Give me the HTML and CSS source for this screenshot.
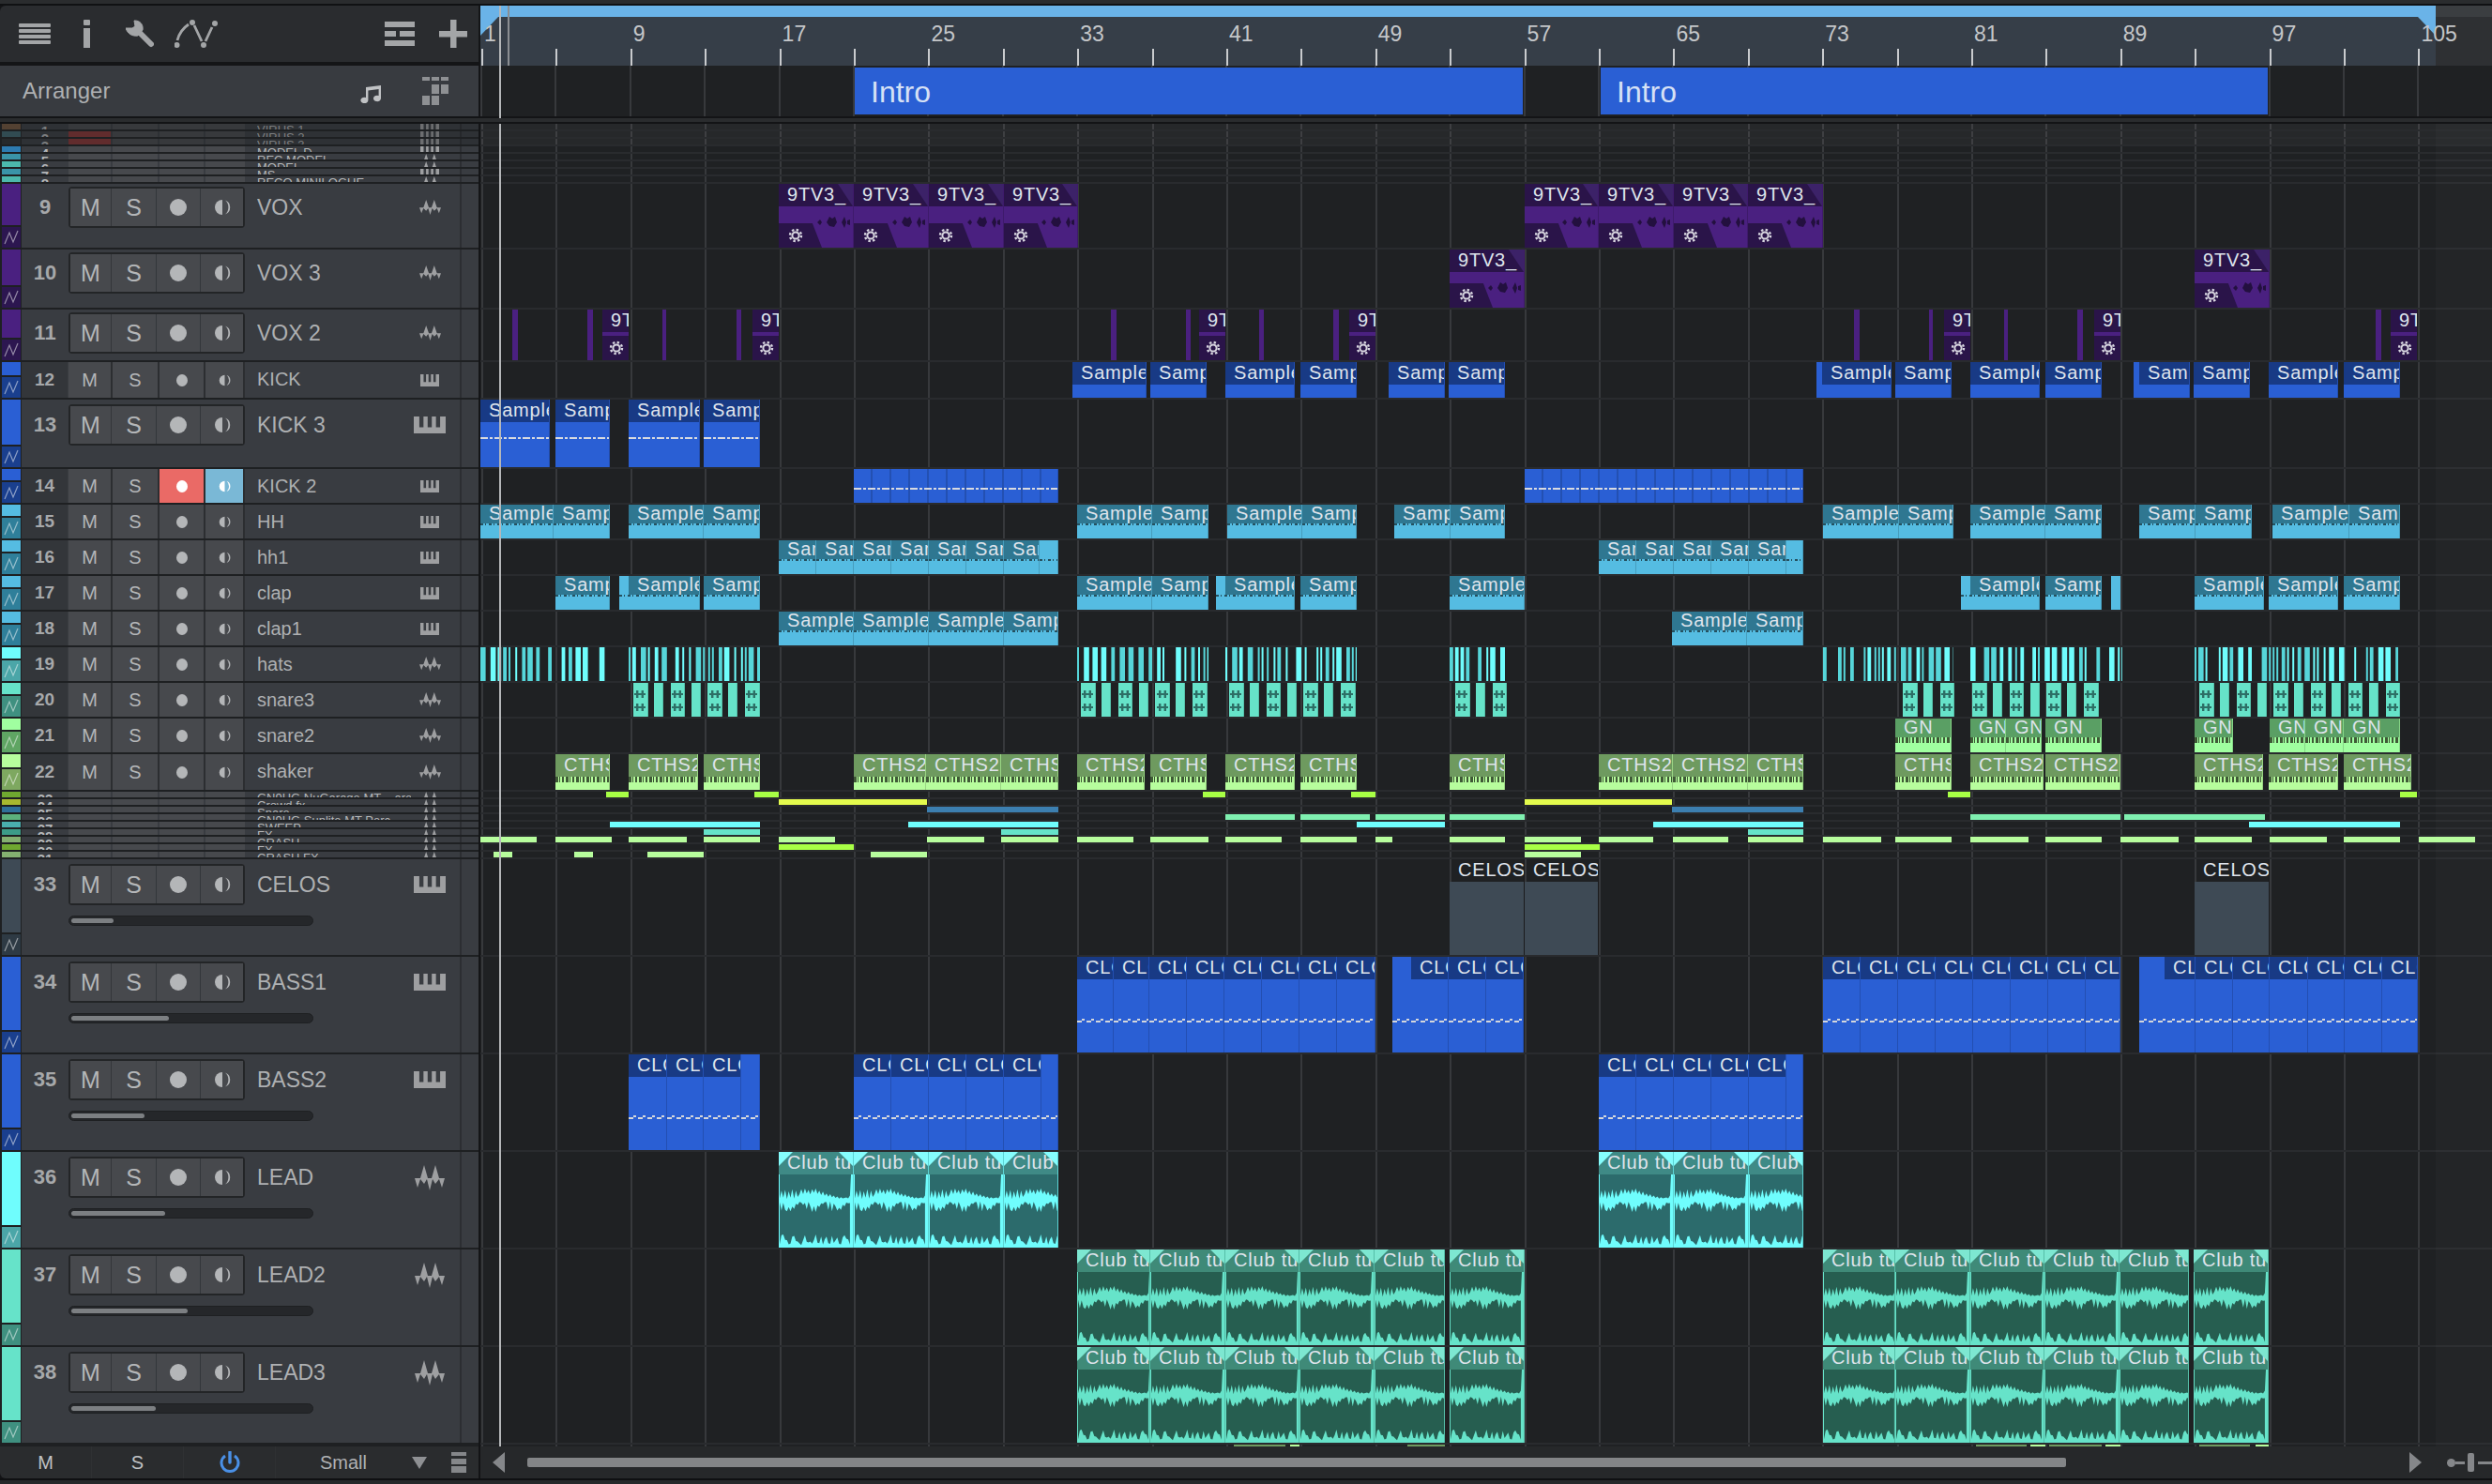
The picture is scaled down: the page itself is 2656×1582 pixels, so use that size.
FILE: index.html
```html
<!DOCTYPE html>
<html lang="en">
<head>
<meta charset="utf-8">
<title>Arranger</title>
<link rel="stylesheet" href="styles.css">
</head>
<body>
<div class="app">
  <div class="top-strip"></div>

  <div class="head-row">
    <div class="toolbar">
      <svg class="tb-ico tb-menu" viewBox="0 0 34 22"><rect width="34" height="4" rx="1"/><rect y="6" width="34" height="4" rx="1"/><rect y="12" width="34" height="4" rx="1"/><rect y="18" width="34" height="4" rx="1"/></svg>
      <svg class="tb-ico tb-info" viewBox="0 0 7 30"><rect width="7" height="6" y="0" rx="1"/><rect y="9" width="7" height="21"/></svg>
      <svg class="tb-ico tb-wrench" viewBox="0 0 30 30"><path d="M15 14 L27 26" fill="none" stroke-width="6" stroke-linecap="round"/><path d="M11 1 C16 1 20 5 19 11 L14 17 C8 18 3 15 1 9 L8 9 L11 7 L10 1 Z" transform="translate(-1 0)"/></svg>
      <svg class="tb-ico tb-auto" viewBox="0 0 46 30"><path class="tb-line" d="M3 22 C5 14 9 9 15 5 M21 6 L29 23 M33 23 L40 8"/><circle cx="2.5" cy="27" r="3"/><circle cx="19" cy="3" r="3"/><circle cx="31" cy="27" r="3"/><circle cx="43" cy="4" r="3"/></svg>
      <span class="tb-fill"></span>
      <svg class="tb-ico tb-list" viewBox="0 0 32 26"><rect width="32" height="6"/><rect y="10" width="12" height="6"/><rect x="16" y="10" width="16" height="6"/><rect y="20" width="32" height="6"/></svg>
      <svg class="tb-ico tb-plus" viewBox="0 0 30 30"><rect x="12" width="6.5" height="30"/><rect y="12" width="30" height="6.5"/></svg>
    </div>
    <div class="ruler" id="ruler">
      <div class="ruler-loop"><div class="ruler-band"></div></div>
      <div class="loop-tri loop-tri--left"></div>
      <div class="loop-tri loop-tri--right"></div>
      <div class="ruler-mark"></div>
    </div>
  </div>

  <div class="arr-row">
    <div class="arr-head">
      <span class="arr-title">Arranger</span>
      <span class="tb-fill"></span>
      <svg class="tb-ico arr-note" viewBox="0 0 24 20"><path d="M6 3 L22 1 V15 A4 3.2 0 1 1 19.6 12 V5 L8.4 6.4 V17 A4 3.2 0 1 1 6 14 Z"/></svg>
      <svg class="tb-ico arr-grid" viewBox="0 0 28 30"><rect width="8" height="4"/><rect x="10" width="8" height="4"/><rect x="20" width="8" height="4"/><rect x="10" y="8" width="8" height="10"/><rect x="20" y="8" width="8" height="10"/><rect y="20" width="8" height="10"/><rect x="10" y="20" width="8" height="10"/></svg>
    </div>
    <div class="arr-lane">
      <div class="marker marker--a">Intro</div>
      <div class="marker marker--b">Intro</div>
    </div>
  </div>

  <div class="split"></div>

  <div class="main">
    <div class="tracks" id="tracks"></div>
    <div class="lanes" id="lanes"></div>
  </div>

  <div class="foot">
    <div class="foot-left">
      <span class="foot-cell">M</span>
      <span class="foot-cell">S</span>
      <span class="foot-cell">
        <svg class="power" viewBox="0 0 22 24"><path d="M6 5 A9 9 0 1 0 16 5" fill="none" stroke-width="3"/><path d="M11 1 V12" stroke-width="3.4" stroke-linecap="round"/></svg>
      </span>
      <span class="foot-size">Small</span>
      <span class="foot-tri"></span>
      <svg class="foot-lines" viewBox="0 0 16 22"><rect width="16" height="4"/><rect y="7" width="16" height="6"/><rect y="15" width="16" height="7"/></svg>
    </div>
    <div class="foot-right">
      <span class="arrow arrow--left"></span>
      <div class="scroll"><div class="scroll-thumb"></div></div>
      <span class="arrow arrow--right"></span>
      <div class="zoomer">
        <span class="zoomer-dot"></span><span class="zoomer-line"></span><span class="zoomer-knob"></span><span class="zoomer-rest"></span>
      </div>
    </div>
  </div>
  <div class="bottom-strip"></div>

  <div class="playhead playhead--upper"></div>
  <div class="playhead playhead--lower"></div>
</div>
<script src="app.js"></script>
</body>
</html>
```

FILE: styles.css
```css
* { box-sizing: border-box; }
html, body { margin: 0; padding: 0; background: #26282a; }
body { font-family: "Liberation Sans", Arial, sans-serif; color: #aeb0b2; }

.app {
  position: relative;
  width: 2656px;
  height: 1582px;
  overflow: hidden;
  display: flex;
  flex-direction: column;
  background: #141517;
}
.top-strip { height: 6px; background: #2a2c2e; border-bottom: 2px solid #101113; flex: none; }
.bottom-strip { height: 6px; background: #26282a; border-top: 2px solid #0f1012; flex: none; }

/* top bar */
.head-row { height: 64px; display: flex; gap: 2px; flex: none; background: #141517; }
.toolbar {
  width: 510px; height: 60px; flex: none;
  background: #2a2c2f;
  border-top-left-radius: 6px;
  display: flex; align-items: center;
  padding-left: 20px; padding-right: 12px;
}
.tb-ico { fill: #a3a5a7; flex: none; display: block; }
.tb-menu { width: 34px; height: 22px; }
.tb-info { width: 7px; height: 30px; margin-left: 35px; }
.tb-wrench { width: 30px; height: 30px; margin-left: 38px; stroke: #a3a5a7; }
.tb-auto { width: 46px; height: 30px; margin-left: 22px; }
.tb-line { fill: none; stroke: #a3a5a7; stroke-width: 2.8; }
.tb-fill { flex: 1; }
.tb-list { width: 32px; height: 26px; }
.tb-plus { width: 30px; height: 30px; margin-left: 26px; }

.ruler { position: relative; flex: 1; height: 64px; background: #2e3033; overflow: hidden; }
.ruler-loop { position: absolute; left: 0; top: 0; width: 2084px; height: 64px; background: #363e48; }
.ruler-band { height: 12px; background: #6ab3e8; }
.ruler::before { content: ""; position: absolute; left: 2084px; right: 0; top: 0; height: 12px; background: #3b3e41; }
.loop-tri { position: absolute; top: 12px; width: 19px; height: 20px; background: #6ab3e8; }
.loop-tri--left { left: 0; clip-path: polygon(0 0, 100% 0, 0 100%); }
.loop-tri--right { left: 2065px; clip-path: polygon(0 0, 100% 0, 100% 100%); }
.ruler-mark { position: absolute; left: 29px; top: 0; width: 2px; height: 64px; background: #8b8e92; }
.tick { position: absolute; top: 46px; width: 2px; height: 18px; background: #c9cbce; }
.bar-num { position: absolute; top: 17px; font-size: 23px; line-height: 26px; color: #c4c6c9; }

/* arranger row */
.arr-row { height: 54px; display: flex; gap: 2px; flex: none; }
.arr-head {
  width: 510px; flex: none; background: #383b40;
  display: flex; align-items: center;
  padding-left: 24px; padding-right: 32px;
}
.arr-title { font-size: 24px; color: #aeb0b2; }
.arr-note { width: 24px; height: 20px; fill: #c0c2c4; margin-top: 6px; }
.arr-grid { width: 28px; height: 30px; margin-left: 42px; fill: #8e9093; }
.arr-lane {
  position: relative; flex: 1;
  background-color: #1f2123;
  background-image: repeating-linear-gradient(90deg, #37393c 0 2px, transparent 2px 79.4px);
  background-position: 0 0;
}
.marker {
  position: absolute; top: 2px; height: 50px;
  background: #2a5fd4; color: #d6e1f5;
  font-size: 32px; line-height: 52px; padding-left: 17px;
}
.marker--a { left: 399px; width: 712px; }
.marker--b { left: 1194px; width: 711px; }

.split {
  height: 8px; flex: none; background: #2a2c2e;
  border-top: 2px solid #131416; border-bottom: 2px solid #131416;
}

/* main */
.main { height: 1410px; display: flex; gap: 2px; flex: none; overflow: hidden; }
.tracks { width: 510px; flex: none; background: #1e2022; }
.lanes {
  position: relative; flex: 1;
  background-color: #1f2123;
  background-image: repeating-linear-gradient(90deg, #37393c 0 2px, transparent 2px 79.4px);
  background-position: 1px 0;
}
.lanes::after {
  content: ""; position: absolute; top: 0; bottom: 0; left: 2084px; right: 0;
  background: rgba(255, 255, 255, .018); pointer-events: none;
}

.track { display: flex; padding-bottom: 2px; }
.strip { width: 20px; margin-left: 2px; margin-right: 1px; display: flex; flex-direction: column; gap: 2px; flex: none; }
.strip-main { flex: 1; background: var(--bd); }
.strip-auto { height: 22px; flex: none; background: var(--au); display: flex; align-items: center; justify-content: center; }
.strip-auto svg { width: 16px; height: 16px; fill: none; stroke: rgba(255,255,255,.5); stroke-width: 1.2; }

.track-content { position: relative; flex: 1; background: #393c41; overflow: hidden; }
.track-content::after {
  content: ""; position: absolute; right: 18px; top: 0; bottom: 0; width: 2px; background: #2c2e32;
}
.track-head { display: flex; align-items: center; }
.num { width: 50px; flex: none; text-align: center; font-weight: 700; color: #a6a8aa; font-size: 22px; }
.btns { display: flex; flex: none; width: 188px; }
.btn { display: flex; align-items: center; justify-content: center; background: #47494d; color: #b4b6b8; }
.btn--m { width: 45px; }
.btn--s { width: 48px; }
.btn--r { width: 47px; }
.btn--w { flex: 1; }
.name { flex: 1; margin-left: 13px; color: #aeb0b2; white-space: nowrap; overflow: hidden; font-size: 23px; min-width: 0; }
.kind { width: 40px; margin-right: 32px; flex: none; display: flex; justify-content: center; align-items: center; }
.kind svg { fill: #9e9fa1; display: block; }
.ico-piano-s { width: 20px; height: 13px; }
.ico-piano-b { width: 34px; height: 18px; }
.ico-wave-s { width: 23px; height: 16px; }
.ico-wave-b { width: 32px; height: 27px; }

.dot { display: block; border-radius: 50%; background: #b4b6b8; }
.mon { display: block; fill: #b4b6b8; }

/* big rows */
.track--big .track-head { height: 44px; }
.track--big .btns {
  height: 44px; border: 2px solid #232527; border-radius: 4px; gap: 1px; background: #33363a;
}
.track--big .btn { font-size: 25px; }
.track--big .dot { width: 18px; height: 18px; }
.track--big .mon { width: 18px; height: 18px; }
.pad3 .track-head { margin-top: 3px; }
.pad5 .track-head { margin-top: 5px; }
.track--big .btn--m { width: 43px; }
.track--big .btn--s { width: 47px; }
.track--big .btn--r { width: 46px; }

.slider {
  margin: 11px 0 0 50px; width: 261px; height: 11px;
  background: #25272a; border-radius: 6px; padding: 2px; border: 1px solid #1e2022;
}
.slider-fill { height: 100%; background: #7c7f82; border-radius: 3px; }

/* small rows */
.track--small .track-head { height: 100%; align-items: stretch; }
.track--small .num { background: #33363a; font-size: 19px; margin-right: 1px; width: 49px; display: flex; align-items: center; justify-content: center; }
.track--small .btns { gap: 2px; background: #2c2e31; border-right: 2px solid #2c2e31; }
.track--small .btn { font-size: 20px; }
.track--small .name { font-size: 20px; line-height: 36px; }
.track--small .dot { width: 12px; height: 13px; }
.track--small .mon { width: 13px; height: 13px; }
.btn--rec { background: #ea6a66; }
.btn--mon { background: #7ab8d6; }
.btn--rec .dot { background: #fff; }
.btn--mon .mon { fill: #fff; }

/* collapsed rows */
.track--mini .track-head { height: 6px; align-items: flex-start; overflow: hidden; }
.track--mini .num { font-size: 15px; line-height: 15px; color: #b4b6b8; width: 50px; }
.track--mini .btns { height: 6px; gap: 2px; }
.track--mini .btn { height: 6px; }
.track--mini .name { font-size: 13px; line-height: 13px; color: #b4b6b8; }
.track--mini .kind { height: 6px; align-items: flex-start; }
.track--mini .strip-main { flex: 1; }
.track--dim .track-content { opacity: .62; }
.track--dim .strip { opacity: .62; }
.btn--red { background: #8a3434; }

/* lanes */
.lane { position: relative; border-bottom: 2px solid #292b2e; }
.lane--soft { background: rgba(255,255,255,.035); }
.lane--last { border-bottom: 0; }

.clip {
  position: absolute; top: 0; bottom: 0;
  background: var(--bd);
  overflow: hidden;
  display: flex; flex-direction: column;
  border-right: 1.5px solid rgba(0,0,0,.16);
}
.clip-head {
  position: relative; flex: none; height: 24px;
  background: var(--hd);
  color: #dfe4ec; font-size: 20px; line-height: 22px; letter-spacing: .8px;
  padding-left: 9px; white-space: nowrap; overflow: hidden;
}
.c-sky .clip-head, .c-mint .clip-head { height: 20px; line-height: 19px; }
.clip-head span { position: relative; }
.clip-body { position: relative; flex: 1; overflow: hidden; }
.bar { position: absolute; top: 0; bottom: 0; background: var(--bd); }

.c-purple { --bd: #4a2080; --hd: #2a1449; --au: #2c1650; }
.c-blue { --bd: #2a5fd4; --hd: #183a85; --au: #1a3f8e; }
.c-sky { --bd: #55bce2; --hd: #2f7791; --au: #2f7f9a; }
.c-aqua { --bd: #6ffdfd; --hd: #3f8a86; --au: #4ba6a8; }
.c-teal { --bd: #66e3c9; --hd: #3f8a78; --au: #3f9080; }
.c-mint { --bd: #a0ffa0; --hd: #5a9f64; --au: #5fa563; }
.c-pale { --bd: #b7fd9d; --hd: #6e9a5f; --au: #7ea860; }
.c-lime { --bd: #a8ff45; --hd: #6fa830; --au: #6fa830; }
.c-yellow { --bd: #e4fb4d; --hd: #a8b830; --au: #a8b830; }
.c-steel { --bd: #3c7fb0; --hd: #2f6f98; --au: #2f6f98; }
.c-green { --bd: #7ff0b0; --hd: #5cb07c; --au: #5cb07c; }
.c-slate { --bd: #3e4a55; --hd: transparent; --au: #2e3a44; }
.c-olive { --bd: #6e9a5f; --hd: #6e9a5f; --au: #6e9a5f; }

/* strip-only colours */
.s-brown { --bd: #74553b; }
.s-dteal { --bd: #3e6670; }
.s-none { --bd: #2c2e30; }
.s-b1 { --bd: #2d7bb0; }
.s-b2 { --bd: #3a94a8; }
.s-b3 { --bd: #4cb8ac; }
.s-g1 { --bd: #6fa830; }
.s-g2 { --bd: #a8b830; }
.s-g3 { --bd: #2f6f98; }
.s-g4 { --bd: #5cb07c; }
.s-g5 { --bd: #4aaeae; }
.s-g6 { --bd: #3c9c88; }
.s-g7 { --bd: #84b070; }

/* clip decorations */
.clip.c-slate { background: transparent; }
.c-slate .clip-body { background: var(--bd); }
.c-purple .clip-head::after {
  content: ""; position: absolute; right: 0; top: 0; width: 16px; height: 24px;
  background: #3c2268; clip-path: polygon(0 0, 100% 0, 100% 100%);
}
.clip--block .clip-head::after { display: none; }
.c-purple .clip-body svg.blobs { position: absolute; right: 2px; top: 10px; width: 36px; height: 14px; fill: #23103f; }
.gear-tab {
  position: absolute; left: 0; bottom: 0; height: 26px; width: 46px;
  background: #2a1449; clip-path: polygon(0 0, 78% 0, 100% 100%, 0 100%);
  display: flex; align-items: center; padding-left: 10px;
}
.gear { width: 16px; height: 16px; display: block; fill: none; stroke: #d8d6e0; flex: none; }
.clip--block { border-right: 0; }
.clip--block .clip-body { background: linear-gradient(#4a2080 0 4px, #2a1449 4px); display: flex; align-items: center; padding: 4px 0 0 7px; }

.c-aqua .clip-head::before, .c-teal .clip-head::before,
.c-aqua .clip-head::after, .c-teal .clip-head::after {
  content: ""; position: absolute; top: 0; width: 15px; height: 15px; background: color-mix(in srgb, var(--bd) 85%, #fff);
}
.c-aqua .clip-head::before, .c-teal .clip-head::before { left: 0; clip-path: polygon(0 0, 100% 0, 0 100%); }
.c-aqua .clip-head::after, .c-teal .clip-head::after { right: 0; clip-path: polygon(0 0, 100% 0, 100% 100%); }
.clip-wave { position: absolute; left: 0; top: 0; width: 80px; height: 78px; display: block; }
.c-aqua .clip-wave { fill: #2c6b6c; }
.c-teal .clip-wave { fill: #265e50; }

.dash { position: absolute; left: 0; right: 0; height: 2px; }
.dash--blue { background: repeating-linear-gradient(90deg, #d8dae0 0 8px, transparent 8px 10px, #d8dae0 10px 13px, transparent 13px 15px); }
.dash--kick { top: 16px; }
.dash--mid { top: 20px; }
.dash--sky { top: 0; height: 2px; background: repeating-linear-gradient(90deg, #25505f 0 3px, transparent 3px 5px, #25505f 5px 6px, transparent 6px 9px); }
.dash--sky-solid { top: 20px; }
.dash--pale { top: 0; height: 6px; background: repeating-linear-gradient(90deg, #3f5a36 0 3px, transparent 3px 4px, #3f5a36 4px 5px, transparent 5px 7px, #3f5a36 7px 9px, transparent 9px 11px); }
.dash--clock {
  top: 42px; height: 4px;
  background:
    repeating-linear-gradient(90deg, #d3d6dc 0 5px, transparent 5px 10px) 0 2px / 100% 2px no-repeat,
    repeating-linear-gradient(90deg, transparent 0 5px, #d3d6dc 5px 8px, transparent 8px 10px) 0 0 / 100% 2px no-repeat;
}
.dash--bass { top: 41px; }
.dash--bass-solid { top: 65px; }
.cuts {
  position: absolute; inset: 0;
  background-image: repeating-linear-gradient(90deg, transparent 0 18px, rgba(0,0,0,.16) 18px 20px);
}

.hats { position: absolute; top: 0; bottom: 0; }
.hats svg { display: block; width: 100%; height: 100%; }
.snare { position: absolute; top: 0; bottom: 0; background: #66e3c9; border-right: 1.5px solid rgba(0,0,0,.15); }
.snare svg { position: absolute; left: 50%; margin-left: -6px; width: 12px; height: 8px; fill: #2d6f66; display: block; }
.snare svg.up { top: 8px; }
.snare svg.dn { top: 22px; }

/* foot */
.foot { height: 34px; display: flex; gap: 2px; flex: none; background: #131416; }
.foot-left {
  width: 510px; flex: none; background: #2a2c2e; display: flex; align-items: center;
  border-bottom-left-radius: 6px; color: #bfc1c3; font-size: 20px;
}
.foot-cell { width: 98px; text-align: center; display: flex; justify-content: center; align-items: center; height: 100%; border-right: 1px solid #2f3133; }
.power { width: 22px; height: 24px; stroke: #4a90e6; fill: none; display: block; }
.foot-size { margin-left: 47px; color: #aeb0b2; }
.foot-tri { margin-left: 48px; width: 0; height: 0; border-left: 8px solid transparent; border-right: 8px solid transparent; border-top: 13px solid #8e9093; }
.foot-lines { width: 16px; height: 22px; margin-left: 26px; fill: #85878a; }
.foot-right { flex: 1; min-width: 0; background: #26282a; display: flex; align-items: center; }
.arrow { width: 0; height: 0; border-top: 11px solid transparent; border-bottom: 11px solid transparent; flex: none; }
.arrow--left { margin-left: 13px; border-right: 13px solid #85878a; }
.arrow--right { margin-left: 18px; border-left: 13px solid #85878a; }
.scroll { width: 1988px; margin-left: 24px; height: 10px; flex: none; }
.scroll-thumb { width: 1640px; height: 100%; background: #838587; border-radius: 2px; }
.zoomer { display: flex; align-items: center; margin-left: 27px; flex: 1; min-width: 0; }
.zoomer-dot { width: 9px; height: 9px; border-radius: 50%; background: #85878a; flex: none; }
.zoomer-line { width: 10px; height: 3px; background: #85878a; flex: none; }
.zoomer-knob { width: 7px; height: 20px; border-radius: 2px; background: #85878a; margin-left: 3px; flex: none; }
.zoomer-rest { flex: 1; height: 3px; background: #85878a; margin-left: 4px; }

.playhead { position: absolute; left: 532px; width: 2px; background: #b5b7b9; pointer-events: none; }
.playhead--upper { top: 6px; height: 120px; }
.playhead--lower { top: 132px; height: 1410px; }
```

FILE: app.js
```js
(function () {
  var ORIGIN = 512;
  var ZIG = '<svg viewBox="0 0 16 16"><path d="M1 15 L6 3 L10 13 L15 1"/></svg>';
  var PIANO = '<path d="M0 0 H4 V9 H7 V0 H10 V9 H13 V0 H16 V9 H19 V0 H23 V14 H0 Z"/>';
  var WAVE = '<path d="M0 14 L6 14 L10 0 L14 14 L18 14 L22 0 L26 14 L32 14 L29 24 L26 15 L22 20 L19 15 L16 27 L13 15 L10 20 L6 15 L3 24 Z"/>';
  var MON = '<svg class="mon" viewBox="0 0 18 18"><path d="M9 1 A8 8 0 0 0 9 17 Z"/><path d="M12 1.5 A8 8 0 0 1 12 16.5 A10 10 0 0 0 12 1.5 Z"/></svg>';
  var GEAR = '<svg class="gear" viewBox="0 0 16 16"><circle cx="8" cy="8" r="3.6" stroke-width="2"/><circle cx="8" cy="8" r="6" stroke-width="2.4" stroke-dasharray="2.4 2.3"/></svg>';
  var BLOBS = '<svg class="blobs" viewBox="0 0 36 14"><path d="M0 7 L3 4 L5 7 L3 10 Z M10 7 L13 1 L16 3 L19 1 L21 7 L18 12 L13 11 Z M26 7 L29 1 L31 7 L29 13 Z M32 5 L35 4 L35 10 L32 9 Z"/></svg>';

  function seq(start, step, end) {
    var out = [], x = start;
    while (x + step < end - 0.5) { out.push([x, x + step]); x += step; }
    out.push([x, end]);
    return out;
  }
  function chain(list) {
    var out = [];
    for (var i = 0; i + 1 < list.length; i++) out.push([list[i], list[i + 1]]);
    return out;
  }

  /* ---- track list: total height includes the 2px separator ---- */
  var T = [];
  function add(n, name, kind, type, h, color, extra) {
    var o = { n: n, name: name, kind: kind, type: type, h: h, color: color };
    for (var k in (extra || {})) o[k] = extra[k];
    T.push(o);
  }
  add(1, 'VIRUS 1', 'piano', 'mini', 8, 's-brown', { dim: 1 });
  add(2, 'VIRUS 2', 'piano', 'mini', 8, 's-dteal', { dim: 1, red: 1 });
  add(3, 'VIRUS 3', 'piano', 'mini', 8, 's-none', { dim: 1, red: 1 });
  add(4, 'MODEL D', 'piano', 'mini', 8, 's-b1');
  add(5, 'REC MODEL', 'wave', 'mini', 8, 's-b2');
  add(6, 'MODEL', 'wave', 'mini', 8, 's-b3');
  add(7, 'MS', 'piano', 'mini', 8, 's-b2');
  add(8, 'RECO MINILOGUE', 'wave', 'mini', 8, 's-b3');
  add(9, 'VOX', 'wave', 'big', 70, 'c-purple', { pad: 3 });
  add(10, 'VOX 3', 'wave', 'big', 64, 'c-purple', { pad: 3 });
  add(11, 'VOX 2', 'wave', 'big', 56, 'c-purple', { pad: 3 });
  add(12, 'KICK', 'piano', 'small', 40, 'c-blue');
  add(13, 'KICK 3', 'pianoB', 'big', 74, 'c-blue', { pad: 5 });
  add(14, 'KICK 2', 'piano', 'small', 38, 'c-blue', { armed: 1 });
  add(15, 'HH', 'piano', 'small', 38, 'c-sky');
  add(16, 'hh1', 'piano', 'small', 38, 'c-sky');
  add(17, 'clap', 'piano', 'small', 38, 'c-sky');
  add(18, 'clap1', 'piano', 'small', 38, 'c-sky');
  add(19, 'hats', 'wave', 'small', 38, 'c-aqua');
  add(20, 'snare3', 'wave', 'small', 38, 'c-teal');
  add(21, 'snare2', 'wave', 'small', 38, 'c-mint');
  add(22, 'shaker', 'wave', 'small', 40, 'c-pale');
  add(23, 'GN9HG NuGarage MT _ ares', 'wave', 'mini', 8, 's-g1');
  add(24, 'Crowd fx', 'wave', 'mini', 8, 's-g2');
  add(25, 'Snare', 'wave', 'mini', 8, 's-g3');
  add(26, 'GN9HG Sunlite MT Perc', 'wave', 'mini', 8, 's-g4');
  add(27, 'SWEEP', 'wave', 'mini', 8, 's-g5');
  add(28, 'FX', 'wave', 'mini', 8, 's-g6');
  add(29, 'CRASH', 'wave', 'mini', 8, 's-g7');
  add(30, 'FX', 'wave', 'mini', 8, 's-g1');
  add(31, 'CRASH FX', 'wave', 'mini', 8, 's-g7');
  add(33, 'CELOS', 'pianoB', 'tall', 104, 'c-slate', { fill: 45 });
  add(34, 'BASS1', 'pianoB', 'tall', 104, 'c-blue', { fill: 104 });
  add(35, 'BASS2', 'pianoB', 'tall', 104, 'c-blue', { fill: 78 });
  add(36, 'LEAD', 'waveB', 'tall', 104, 'c-aqua', { fill: 100 });
  add(37, 'LEAD2', 'waveB', 'tall', 104, 'c-teal', { fill: 124 });
  add(38, 'LEAD3', 'waveB', 'tall', 104, 'c-teal', { fill: 90 });

  function kindSvg(kind) {
    if (kind === 'piano') return '<svg class="ico-piano-s" viewBox="0 0 23 14" preserveAspectRatio="none">' + PIANO + '</svg>';
    if (kind === 'pianoB') return '<svg class="ico-piano-b" viewBox="0 0 23 14" preserveAspectRatio="none">' + PIANO + '</svg>';
    if (kind === 'waveB') return '<svg class="ico-wave-b" viewBox="0 0 32 27">' + WAVE + '</svg>';
    return '<svg class="ico-wave-s" viewBox="0 0 32 27" preserveAspectRatio="none">' + WAVE + '</svg>';
  }

  function buttons(t) {
    if (t.type === 'mini') {
      return '<div class="btns"><div class="btn btn--m' + (t.red ? ' btn--red' : '') + '"></div><div class="btn btn--s"></div><div class="btn btn--r"></div><div class="btn btn--w"></div></div>';
    }
    return '<div class="btns"><div class="btn btn--m">M</div><div class="btn btn--s">S</div>' +
      '<div class="btn btn--r' + (t.armed ? ' btn--rec' : '') + '"><span class="dot"></span></div>' +
      '<div class="btn btn--w' + (t.armed ? ' btn--mon' : '') + '">' + MON + '</div></div>';
  }

  var tracksEl = document.getElementById('tracks');
  var lanesEl = document.getElementById('lanes');
  var laneByNum = {};

  T.forEach(function (t) {
    var row = document.createElement('div');
    var typeClass = (t.type === 'tall') ? 'track--big track--tall' : 'track--' + t.type;
    row.className = 'track ' + typeClass + (t.dim ? ' track--dim' : '') + (t.pad ? ' pad' + t.pad : '') + (t.type === 'tall' ? ' pad5' : '');
    row.style.height = t.h + 'px';
    var strip = '<div class="strip ' + t.color + '"><div class="strip-main"></div>' +
      (t.type === 'mini' ? '' : '<div class="strip-auto">' + ZIG + '</div>') + '</div>';
    var slider = t.type === 'tall'
      ? '<div class="slider"><div class="slider-fill" style="width:' + t.fill + 'px"></div></div>' : '';
    row.innerHTML = strip + '<div class="track-content"><div class="track-head"><div class="num">' + t.n + '</div>' +
      buttons(t) + '<div class="name">' + t.name + '</div><div class="kind">' + kindSvg(t.kind) + '</div></div>' + slider + '</div>';
    tracksEl.appendChild(row);

    var lane = document.createElement('div');
    lane.className = 'lane' + (t.dim ? ' lane--soft' : '');
    lane.style.height = t.h + 'px';
    lanesEl.appendChild(lane);
    laneByNum[t.n] = lane;
  });

  /* trailing sliver of the next track */
  var tail = document.createElement('div');
  tail.className = 'track track--mini';
  tail.style.height = '2px';
  tail.innerHTML = '<div class="strip c-pale"><div class="strip-main"></div></div>';
  tracksEl.appendChild(tail);
  var tailLane = document.createElement('div');
  tailLane.className = 'lane lane--last';
  tailLane.style.height = '2px';
  lanesEl.appendChild(tailLane);
  laneByNum[39] = tailLane;

  function place(el, a, b) {
    el.style.left = (a - ORIGIN) + 'px';
    el.style.width = (b - a) + 'px';
  }

  function clip(n, r, color, label, opts) {
    opts = opts || {};
    var el = document.createElement('div');
    el.className = 'clip ' + color + (opts.block ? ' clip--block' : '');
    place(el, r[0], r[1]);
    var head = '';
    if (label) {
      var lead = r[2] || 0;
      head = '<div class="clip-head"' + (lead ? ' style="margin-left:' + lead + 'px"' : '') + '><span>' + label + '</span></div>';
    }
    el.innerHTML = head + '<div class="clip-body">' + (opts.body || '') + '</div>';
    laneByNum[n].appendChild(el);
    return el;
  }
  function bar(n, r, color) {
    var el = document.createElement('div');
    el.className = 'bar ' + color;
    place(el, r[0], r[1]);
    laneByNum[n].appendChild(el);
  }
  function clips(n, list, color, label, opts) {
    list.forEach(function (r) { clip(n, r, color, label, opts); });
  }
  function bars(n, list, color) {
    list.forEach(function (r) { bar(n, r, color); });
  }

  /* ---- ruler ---- */
  var ruler = document.getElementById('ruler');
  for (var i = 0; i <= 26; i++) {
    var tick = document.createElement('div');
    tick.className = 'tick';
    tick.style.left = (1 + i * 79.4) + 'px';
    ruler.appendChild(tick);
    if (i % 2 === 0) {
      var lab = document.createElement('div');
      lab.className = 'bar-num';
      lab.textContent = String(1 + i * 4);
      lab.style.left = (4 + i * 79.4) + 'px';
      ruler.appendChild(lab);
    }
  }

  /* ---- waveform path shared by the audio clips ---- */
  var env = [.9, .35, .85, .3, .95, .4, .85, .25, .92, .35, .8, .6, .25, .6, .2, .55, .3, .62, .25, .5, .2, .58, .35, .66, .42, .72, .55, .78, .6, .82, .7, .86, .76, .92, .82, .9, .86, .84, .9, .7];
  var p1 = 'M1 0', top2 = '', bot2 = '';
  env.forEach(function (v, k) {
    var x = 1 + k * 1.92;
    p1 += ' L' + x.toFixed(1) + ' ' + (12 + v * 15).toFixed(1);
    top2 += (k ? ' L' : 'M') + x.toFixed(1) + ' ' + (52 - 9 - env[(k * 3) % env.length] * 15).toFixed(1);
  });
  for (var k = env.length - 1; k >= 0; k--) {
    var xx = 1 + k * 1.92;
    bot2 += ' L' + xx.toFixed(1) + ' ' + (52 + 9 + env[(k * 7) % env.length] * 15).toFixed(1);
  }
  var WAVE_PATH = p1 + ' L77 0 Z ' + top2 + bot2 + ' Z';
  var AUDIO = '<svg class="clip-wave" viewBox="0 0 80 78" preserveAspectRatio="none"><path d="' + WAVE_PATH + '"/></svg>';

  /* ---- 9 / 10 / 11 vocals ---- */
  var PURPLE_BODY = BLOBS + '<div class="gear-tab">' + GEAR + '</div>';
  var VOX = '9TV3_Vocal';
  clips(9, chain([830, 910, 990, 1070, 1149]).concat(chain([1625, 1704, 1784, 1863, 1943])), 'c-purple', VOX, { body: PURPLE_BODY });
  clips(10, [[1545, 1625], [2339, 2419]], 'c-purple', VOX, { body: PURPLE_BODY });
  bars(11, [[546, 552], [626, 632], [706, 710], [785, 790], [1184, 1190], [1264, 1269], [1342, 1347], [1421, 1427], [1976, 1982], [2056, 2060], [2136, 2140], [2214, 2220], [2532, 2538]], 'c-purple');
  clips(11, [[642, 670], [802, 830], [1278, 1306], [1438, 1466], [2072, 2100], [2232, 2260], [2548, 2576]], 'c-purple', VOX, { block: 1, body: GEAR });

  /* ---- kicks ---- */
  var SAMPLE = 'Sample(12)';
  clips(12, [[1143, 1222], [1226, 1286], [1306, 1380], [1386, 1446], [1480, 1540], [1544, 1604], [1936, 2016, 6], [2020, 2080], [2100, 2174], [2180, 2240], [2274, 2334, 6], [2338, 2398], [2418, 2492], [2498, 2558]], 'c-blue', SAMPLE);
  clips(13, [[512, 586], [592, 650], [670, 746], [750, 810]], 'c-blue', SAMPLE, { body: '<div class="dash dash--blue dash--kick"></div>' });
  clips(14, [[910, 1128], [1625, 1922]], 'c-blue', '', { body: '<div class="cuts"></div><div class="dash dash--blue dash--mid"></div>' });

  /* ---- hats etc ---- */
  var SKY = { body: '<div class="dash dash--sky"></div>' };
  clips(15, [[512, 590], [590, 650], [670, 750], [750, 810], [1148, 1228], [1228, 1288], [1308, 1388], [1388, 1446], [1486, 1546], [1546, 1604], [1943, 2024], [2024, 2082], [2100, 2180], [2180, 2240], [2280, 2340], [2340, 2400], [2422, 2504], [2504, 2558]], 'c-sky', SAMPLE, SKY);
  clips(16, seq(830, 40, 1108).concat(seq(1704, 40, 1904)), 'c-sky', SAMPLE, SKY);
  clips(16, [[1108, 1128], [1904, 1922]], 'c-sky', '', { body: '<div class="dash dash--sky dash--sky-solid"></div>' });
  clips(17, [[592, 650], [660, 746, 10], [750, 810], [1148, 1228], [1228, 1288], [1296, 1380, 10], [1386, 1446], [1545, 1625], [2090, 2174, 10], [2180, 2240], [2339, 2413], [2418, 2492], [2498, 2558]], 'c-sky', SAMPLE, SKY);
  bars(17, [[2250, 2260]], 'c-sky');
  clips(18, [[830, 910], [910, 990], [990, 1070], [1070, 1128], [1782, 1862], [1862, 1922]], 'c-sky', SAMPLE, SKY);

  /* stripes of the hat track */
  var seed = 17;
  function rnd() { seed = (seed * 9301 + 49297) % 233280; return seed / 233280; }
  function hats(a, b) {
    var el = document.createElement('div');
    el.className = 'hats';
    place(el, a, b);
    var w = b - a, x = 0, s = '';
    while (x < w) {
      var sw = 2 + Math.floor(rnd() * 3) * 1.8;
      var gap = 2 + Math.floor(rnd() * 3) * 1.6;
      if (rnd() > .86) gap += 7;
      s += '<rect x="' + x.toFixed(1) + '" y="0" width="' + Math.min(sw, w - x).toFixed(1) + '" height="36" fill="' + (rnd() > .45 ? '#6ffdfd' : '#56d6da') + '"/>';
      x += sw + gap;
    }
    el.innerHTML = '<svg viewBox="0 0 ' + w + ' 36" preserveAspectRatio="none">' + s + '</svg>';
    laneByNum[19].appendChild(el);
  }
  [[512, 648], [670, 810], [1148, 1288], [1306, 1446], [1545, 1604], [1943, 2082], [2100, 2240], [2248, 2262], [2339, 2556]].forEach(function (r) { hats(r[0], r[1]); });

  /* snare slices */
  var HH = function (c) { return '<svg class="' + c + '" viewBox="0 0 12 8"><rect x="2" width="2.4" height="8"/><rect x="7.6" width="2.4" height="8"/><rect y="3" width="12" height="2"/></svg>'; };
  function snares(base, count) {
    for (var s = 0; s < count; s++) {
      var x = base + s * 19.85 + (s % 2 ? 2 : 0);
      var wide = s % 2 === 0;
      var el = document.createElement('div');
      el.className = 'snare';
      place(el, x, x + (wide ? 15.5 : 10));
      if (wide) el.innerHTML = HH('up') + HH('dn');
      laneByNum[20].appendChild(el);
    }
  }
  snares(675, 7); snares(1152, 7); snares(1310, 7); snares(1551, 3); snares(2028, 3); snares(2102, 7); snares(2344, 11);

  clips(21, [[2020, 2080], [2100, 2138], [2138, 2176], [2180, 2240], [2339, 2380], [2419, 2457], [2457, 2498], [2498, 2558]], 'c-mint', 'GN', { body: '<div class="dash dash--pale"></div>' });

  clips(22, [[592, 650], [670, 744], [750, 810], [910, 987], [987, 1067], [1067, 1128], [1148, 1220], [1226, 1286], [1306, 1380], [1386, 1446], [1545, 1604], [1704, 1783], [1783, 1863], [1863, 1922], [2020, 2080], [2100, 2178], [2180, 2260], [2339, 2412], [2418, 2492], [2498, 2570]], 'c-pale', 'CTHS2', { body: '<div class="dash dash--pale"></div>' });

  /* ---- collapsed lanes ---- */
  bars(23, [[646, 670], [804, 830], [1282, 1306], [1440, 1466], [2076, 2100], [2558, 2576]], 'c-lime');
  bars(24, [[830, 988], [1625, 1782]], 'c-yellow');
  bars(25, [[988, 1128], [1782, 1922]], 'c-steel');
  bars(26, [[1306, 1380], [1386, 1460], [1466, 1540], [1545, 1625], [2100, 2180], [2180, 2260], [2264, 2338], [2338, 2414]], 'c-green');
  bars(27, [[650, 810], [968, 1128], [1446, 1540], [1762, 1922], [2397, 2558]], 'c-aqua');
  bars(28, [[750, 810], [1067, 1128], [1863, 1922]], 'c-teal');
  bars(29, [[512, 572], [592, 652], [670, 732], [750, 810], [830, 890], [988, 1049], [1067, 1128], [1148, 1208], [1226, 1288], [1306, 1366], [1386, 1446], [1466, 1484], [1545, 1604], [1625, 1685], [1704, 1762], [1783, 1842], [1863, 1922], [1943, 2005], [2020, 2080], [2100, 2162], [2180, 2240], [2260, 2322], [2339, 2400], [2419, 2480], [2498, 2558], [2578, 2638]], 'c-pale');
  bars(30, [[830, 910], [1625, 1705]], 'c-lime');
  bars(31, [[526, 546], [612, 632], [690, 750], [928, 988], [1625, 1685]], 'c-pale');

  /* ---- long instrument rows ---- */
  clips(33, [[1545, 1625], [1625, 1704], [2339, 2419]], 'c-slate', 'CELOS');

  var CLOCK = 'CLOCK';
  var CL = { body: '<div class="dash dash--clock"></div>' };
  clips(34, chain([1148, 1187, 1225, 1265, 1305, 1345, 1385, 1425, 1466]).concat([[1484, 1544, 20], [1544, 1584], [1584, 1624]]).concat(chain([1943, 1983, 2023, 2063, 2103, 2143, 2183, 2223, 2260])).concat([[2280, 2340, 27]]).concat(chain([2340, 2380, 2419, 2460, 2499, 2539, 2577])), 'c-blue', CLOCK, CL);
  var CL2 = { body: '<div class="dash dash--clock dash--bass"></div>' };
  clips(35, chain([670, 711, 750, 790]).concat(chain([910, 950, 990, 1030, 1070, 1110])).concat(chain([1704, 1744, 1784, 1824, 1864, 1904])), 'c-blue', CLOCK, CL2);
  clips(35, [[790, 810], [1110, 1128], [1904, 1922]], 'c-blue', '', { body: '<div class="dash dash--clock dash--bass-solid"></div>' });

  var CLUB = 'Club tune';
  clips(36, chain([830, 910, 990, 1070, 1128]).concat(chain([1704, 1784, 1864, 1922])), 'c-aqua', CLUB, { body: AUDIO });
  var LEADS = chain([1148, 1226, 1306, 1385, 1465, 1540]).concat([[1545, 1625]]).concat(chain([1943, 2020, 2100, 2179, 2259, 2333])).concat([[2338, 2418]]);
  clips(37, LEADS, 'c-teal', CLUB, { body: AUDIO });
  clips(38, LEADS, 'c-teal', CLUB, { body: AUDIO });

  bars(39, [[1315, 1370], [1500, 1540], [2106, 2160], [2184, 2240], [2344, 2398]], 'c-olive');
  bars(39, [[1375, 1385], [2164, 2180], [2244, 2260], [2404, 2418]], 'c-pale');

  /* ---- a clip shows its name up to the glyph that crosses its right edge ---- */
  document.querySelectorAll('.clip-head span').forEach(function (s) {
    var room = s.parentNode.clientWidth - 9;
    var text = s.textContent;
    while (text.length > 1) {
      s.textContent = text.slice(0, -1);
      if (s.offsetWidth < room) { s.textContent = text; break; }
      text = text.slice(0, -1);
    }
  });
})();
```
